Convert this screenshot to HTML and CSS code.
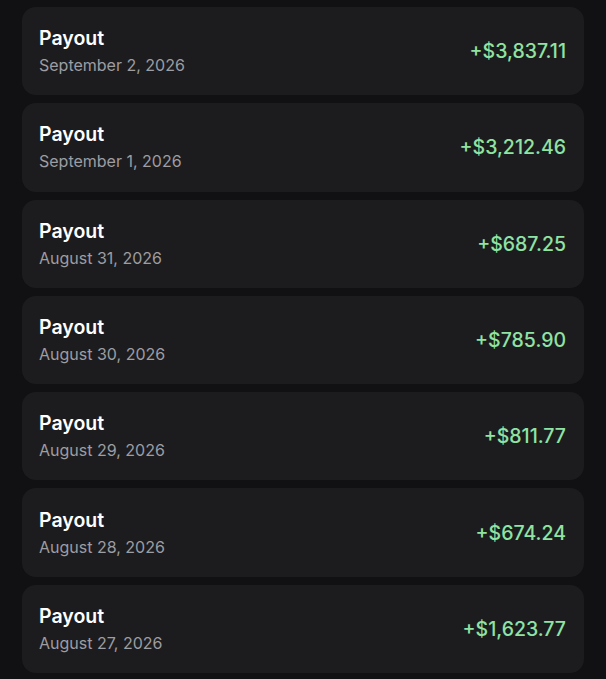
FILE: index.html
```html
<!doctype html>
<html lang="en">
<head>
	<meta charset="UTF-8">
	<title>Payouts</title>
	<link rel="stylesheet" href="styles.css">
</head>
<body>
	<div class="list">
		<div class="row">
			<div class="info">
				<div class="title">Payout</div>
				<div class="date">September 2, 2026</div>
			</div>
			<div class="amount">+$3,837.11</div>
		</div>
		<div class="row">
			<div class="info">
				<div class="title">Payout</div>
				<div class="date">September 1, 2026</div>
			</div>
			<div class="amount">+$3,212.46</div>
		</div>
		<div class="row">
			<div class="info">
				<div class="title">Payout</div>
				<div class="date">August 31, 2026</div>
			</div>
			<div class="amount">+$687.25</div>
		</div>
		<div class="row">
			<div class="info">
				<div class="title">Payout</div>
				<div class="date">August 30, 2026</div>
			</div>
			<div class="amount">+$785.90</div>
		</div>
		<div class="row">
			<div class="info">
				<div class="title">Payout</div>
				<div class="date">August 29, 2026</div>
			</div>
			<div class="amount">+$811.77</div>
		</div>
		<div class="row">
			<div class="info">
				<div class="title">Payout</div>
				<div class="date">August 28, 2026</div>
			</div>
			<div class="amount">+$674.24</div>
		</div>
		<div class="row">
			<div class="info">
				<div class="title">Payout</div>
				<div class="date">August 27, 2026</div>
			</div>
			<div class="amount">+$1,623.77</div>
		</div>
	</div>
</body>
</html>
```
FILE: styles.css
```css
html, body {
	margin: 0;
	padding: 0;
	background-color: #111114;
}
body {
	font-family: Inter, "Liberation Sans", sans-serif;
	color: #fff;
}
.list {
	display: flex;
	flex-direction: column;
	gap: 8px;
	padding: 7px 22px;
}
.row {
	display: flex;
	align-items: center;
	justify-content: space-between;
	height: 88.3px;
	box-sizing: border-box;
	padding: 0 18px 0 17px;
	background-color: #1c1c1f;
	border-radius: 14px;
}
.info {
	display: flex;
	flex-direction: column;
	gap: 4px;
}
.title {
	font-size: 19.5px;
	line-height: 24px;
	font-weight: 600;
	color: #fff;
}
.date {
	font-size: 16px;
	line-height: 22px;
	color: #9d9da2;
}
.amount {
	font-size: 19.5px;
	line-height: 24px;
	font-weight: 500;
	color: #8fe3a3;
}
```
